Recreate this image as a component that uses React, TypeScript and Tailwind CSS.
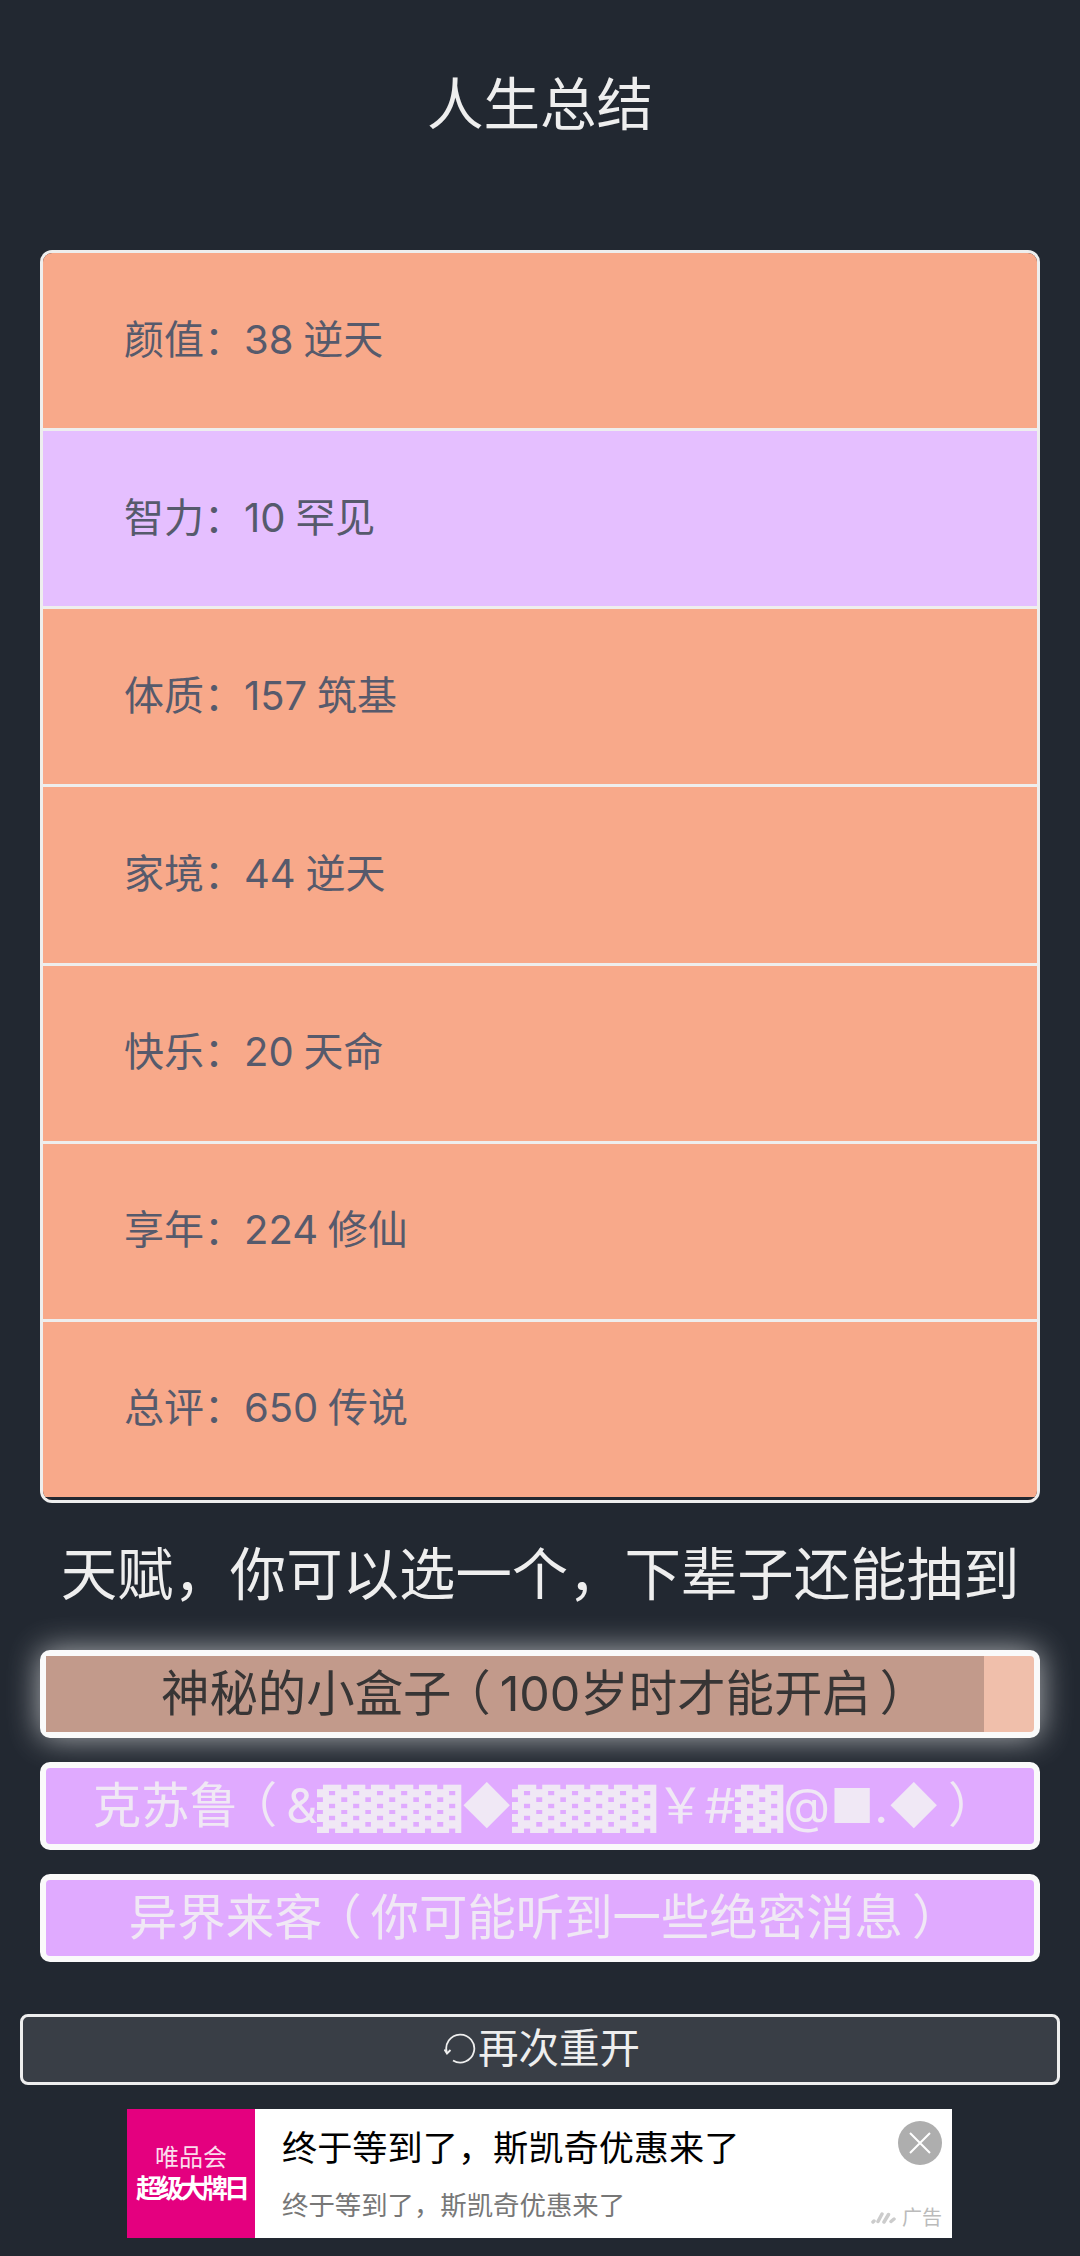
const FONT = 'font-["Inter","Noto_Sans_CJK_SC",sans-serif]';

const PROPERTIES = [
  { label: '颜值：38 逆天', tone: 'bg-[#f8a98a]' },
  { label: '智力：10 罕见', tone: 'bg-[#e5bfff]' },
  { label: '体质：157 筑基', tone: 'bg-[#f8a98a]' },
  { label: '家境：44 逆天', tone: 'bg-[#f8a98a]' },
  { label: '快乐：20 天命', tone: 'bg-[#f8a98a]' },
  { label: '享年：224 修仙', tone: 'bg-[#f8a98a]' },
  { label: '总评：650 传说', tone: 'bg-[#f8a98a]' },
];

// the brackets sit nearer the middle of their box in the original font,
// so use the half-width forms and pad them back out to a full cell
function Open() {
  return <span className='pr-[9px] pl-[15px] [font-feature-settings:"halt"]'>（</span>;
}

function Close() {
  return <span className='pr-[15px] pl-[9px] [font-feature-settings:"halt"]'>）</span>;
}

// dotted shade block, taken from DejaVu and stretched to a full CJK cell
function Shade() {
  return (
    <span className='inline-block w-[48px] origin-left scale-x-[1.52] align-baseline font-["DejaVu_Sans"] text-[41px] leading-none'>▓</span>
  );
}

function RetryIcon() {
  return (
    <svg width="34" height="32" viewBox="0 0 34 32" fill="none" stroke="#eeeeee" strokeWidth="1.8" className="shrink-0">
      <path d="M3 20 A14 14 0 1 1 9 27.5" />
      <path d="M0.5 16.5 L3 20.5 L6.5 17" />
    </svg>
  );
}

function Ad() {
  return (
    <div className="relative mt-[24px] ml-[127px] flex h-[129px] w-[825px] bg-white">
      <div className="flex w-[128px] shrink-0 flex-col items-center justify-center bg-[#e4007f] pt-[2px] text-white">
        <span className="text-[24px] leading-[30px] text-[#fbdcec]">唯品会</span>
        <span className="text-[26px] leading-[32px] font-bold tracking-[-4px]">超级大牌日</span>
      </div>
      <div className="flex flex-col pl-[27px]">
        <span className="mt-[16px] text-[35.2px] leading-[46px] text-black">终于等到了，斯凯奇优惠来了</span>
        <span className="mt-[16px] text-[26.4px] leading-[36px] text-[#777777]">终于等到了，斯凯奇优惠来了</span>
      </div>
      <div className="absolute top-[12px] right-[10px] flex h-[44px] w-[44px] items-center justify-center rounded-full bg-[#aeaeae]">
        <svg width="22" height="22" viewBox="0 0 22 22" stroke="white" strokeWidth="2">
          <path d="M1 1 L21 21 M21 1 L1 21" />
        </svg>
      </div>
      <div className="absolute right-[10px] bottom-[8px] flex items-center gap-[6px] text-[20px] leading-[24px] text-[#bbbbbb]">
        <svg width="25" height="14" viewBox="0 0 25 14" fill="none" stroke="#cccccc" strokeWidth="3.5" strokeLinecap="round">
          <path d="M2 11 L3 10 M7 10.5 L11 3 M13 11 L17.5 3.5 M20 10.5 L23 8" />
        </svg>
        广告
      </div>
    </div>
  );
}

export default function App() {
  return (
    <div className={`h-[2256px] w-[1080px] overflow-hidden bg-[#222831] ${FONT} text-[#eeeeee]`}>
      <h1 className="pt-[70px] text-center text-[56.5px] leading-[70px] font-normal">人生总结</h1>

      <ul className="mx-[40px] mt-[110px] overflow-hidden rounded-[12px] border-[3px] border-[#eeeeee]">
        {PROPERTIES.map((row, i) => (
          <li
            key={row.label}
            className={`flex h-[178.14px] items-center border-b-[3px] pb-[2px] pl-[81px] text-[40px] [word-spacing:-1.5px] text-[#565a6c] ${row.tone} ${
              i === PROPERTIES.length - 1 ? 'border-b-[#222831]' : 'border-b-[#eeeeee]'
            }`}
          >
            {row.label}
          </li>
        ))}
      </ul>

      <h2 className="mt-[36px] text-center text-[56.4px] leading-[72px] font-normal">天赋，你可以选一个，下辈子还能抽到</h2>

      <div className="mx-[40px] mt-[39px] flex flex-col gap-[24px]">
        <div className="relative flex h-[88px] items-center justify-center rounded-[10px] border-[6px] border-[#fafafa] bg-[#f0bfab] text-[48.4px] text-[#373535] shadow-[0_0_32px_rgba(255,255,255,0.65)]">
          <div className="absolute inset-y-0 left-0 w-[938px] bg-[#c29a8b]" />
          <span className="relative">神秘的小盒子<Open />100岁时才能开启<Close /></span>
        </div>
        <div className="flex h-[88px] items-center justify-center overflow-hidden rounded-[10px] border-[6px] border-[#fafafa] bg-[#e0aaff] text-[48.4px] text-[#f0e8f5]">
          <span>克苏鲁<Open />&amp;<Shade /><Shade /><Shade />◆<Shade /><Shade /><Shade />￥#<Shade />@■.◆<Close /></span>
        </div>
        <div className="flex h-[88px] items-center justify-center rounded-[10px] border-[6px] border-[#fafafa] bg-[#e0aaff] text-[48.4px] text-[#f0e8f5]">
          <span>异界来客<Open />你可能听到一些绝密消息<Close /></span>
        </div>
      </div>

      <div className="mx-[20px] mt-[52px] flex h-[71px] items-center justify-center rounded-[8px] border-[3px] border-[#eeeeee] bg-[#393e46] pl-[4px] text-[40.5px]">
        <RetryIcon />
        再次重开
      </div>

      <Ad />
    </div>
  );
}
